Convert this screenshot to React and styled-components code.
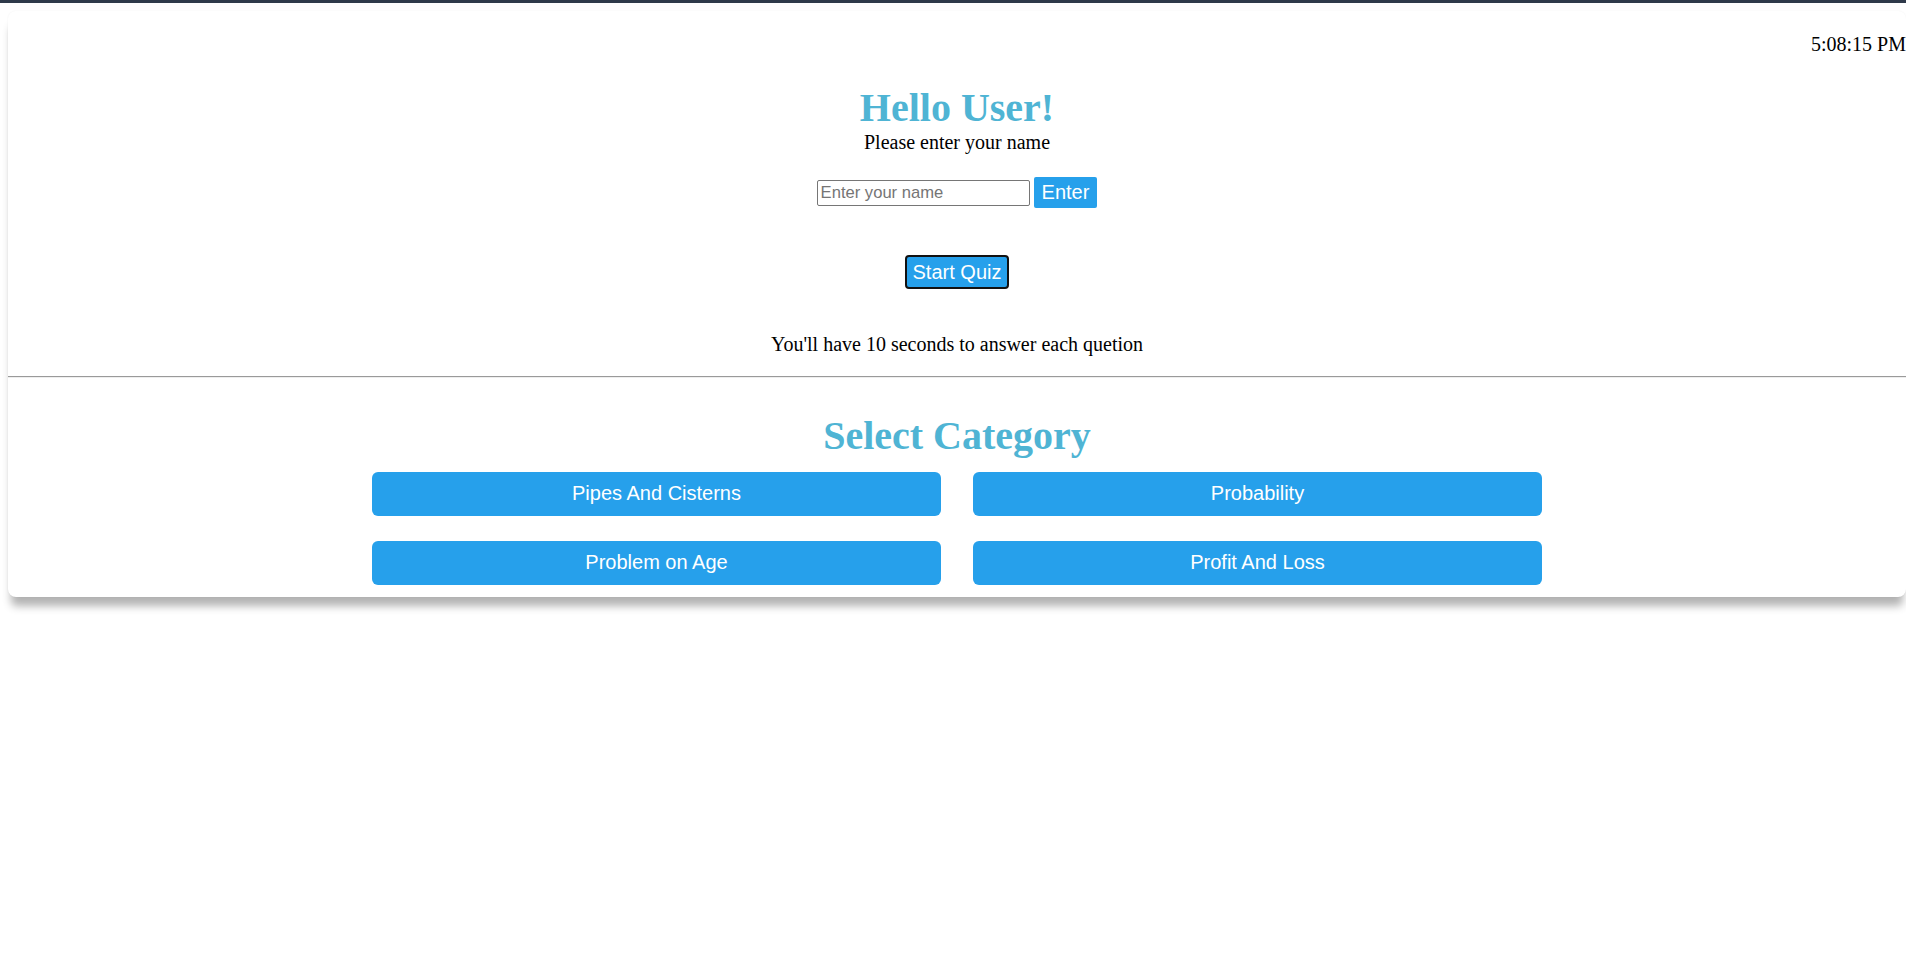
import React, { useState } from "react"
import styled, { createGlobalStyle } from "styled-components"

const GlobalStyle = createGlobalStyle`
  html, body {
    margin: 0;
    padding: 0;
    background: #fff;
    font-family: "Liberation Serif", "Times New Roman", serif;
    font-size: 20px;
    color: #000;
  }
  body {
    min-height: 100vh;
  }
`

const Page = styled.div`
  padding: 8px 0 40px 8px;
  border-top: 3px solid #2f3a4a;
`

const Card = styled.main`
  background: #fff;
  border-radius: 8px;
  box-shadow: 0 12px 9px -3px rgba(0, 0, 0, 0.3), 0 0 2px rgba(0, 0, 0, 0.06);
  padding: 22px 0 12px;
`

const Clock = styled.div`
  text-align: right;
  line-height: 23px;
  white-space: nowrap;
`

const Greeting = styled.section`
  display: flex;
  flex-direction: column;
  align-items: center;
  margin-top: 29px;
`

const Title = styled.h1`
  margin: 0;
  font-size: 40px;
  line-height: 46px;
  font-weight: bold;
  color: #4fb4d4;
  text-align: center;
`

const Line = styled.p`
  margin: ${(p) => p.$mt || 0}px 0 0;
  line-height: 23px;
  text-align: center;
`

const NameRow = styled.form`
  display: flex;
  align-items: center;
  gap: 4px;
  margin-top: 23px;
`

const NameInput = styled.input`
  box-sizing: border-box;
  width: 213px;
  height: 26px;
  padding: 1px 3px;
  border: 1px solid #767676;
  border-radius: 2px;
  font-family: "Liberation Sans", Arial, sans-serif;
  font-size: 16.6px;
  color: #000;
  &::placeholder {
    color: #757575;
  }
`

const BlueButton = styled.button`
  box-sizing: border-box;
  background: #26a0eb;
  color: #fff;
  font-family: "Liberation Sans", Arial, sans-serif;
  font-size: 20px;
  line-height: 23px;
  cursor: pointer;
`

const EnterButton = styled(BlueButton)`
  height: 31px;
  padding: 0 8px;
  border: none;
  border-radius: 2px;
`

const StartButton = styled(BlueButton)`
  height: 34px;
  margin-top: 47px;
  padding: 0 6px;
  border: 2px solid #111;
  border-radius: 4px;
`

const Rule = styled.hr`
  margin: 20px 0 0;
  border: none;
  border-top: 1px solid #9a9a9a;
  border-bottom: 1px solid #eeeeee;
`

const Categories = styled.section`
  display: flex;
  flex-direction: column;
  align-items: center;
  margin-top: 35px;
`

const Grid = styled.div`
  display: grid;
  grid-template-columns: repeat(2, 569px);
  column-gap: 32px;
  row-gap: 25px;
  margin-top: 13px;
`

const CategoryButton = styled.button`
  height: 44px;
  border: none;
  border-radius: 6px;
  background: #26a0eb;
  color: #fff;
  font-family: "Liberation Sans", Arial, sans-serif;
  font-size: 20px;
  cursor: pointer;
`

const categories = [
  "Pipes And Cisterns",
  "Probability",
  "Problem on Age",
  "Profit And Loss",
]

export default function App() {
  const [name, setName] = useState("")

  return (
    <>
      <GlobalStyle />
      <Page>
        <Card>
          <Clock>5:08:15 PM</Clock>
          <Greeting>
            <Title>Hello User!</Title>
            <Line>Please enter your name</Line>
            <NameRow onSubmit={(e) => e.preventDefault()}>
              <NameInput
                placeholder="Enter your name"
                value={name}
                onChange={(e) => setName(e.target.value)}
              />
              <EnterButton type="submit">Enter</EnterButton>
            </NameRow>
            <StartButton type="button">Start Quiz</StartButton>
            <Line $mt={43.5}>You'll have 10 seconds to answer each quetion</Line>
          </Greeting>
          <Rule />
          <Categories>
            <Title>Select Category</Title>
            <Grid>
              {categories.map((c) => (
                <CategoryButton key={c}>{c}</CategoryButton>
              ))}
            </Grid>
          </Categories>
        </Card>
      </Page>
    </>
  )
}
